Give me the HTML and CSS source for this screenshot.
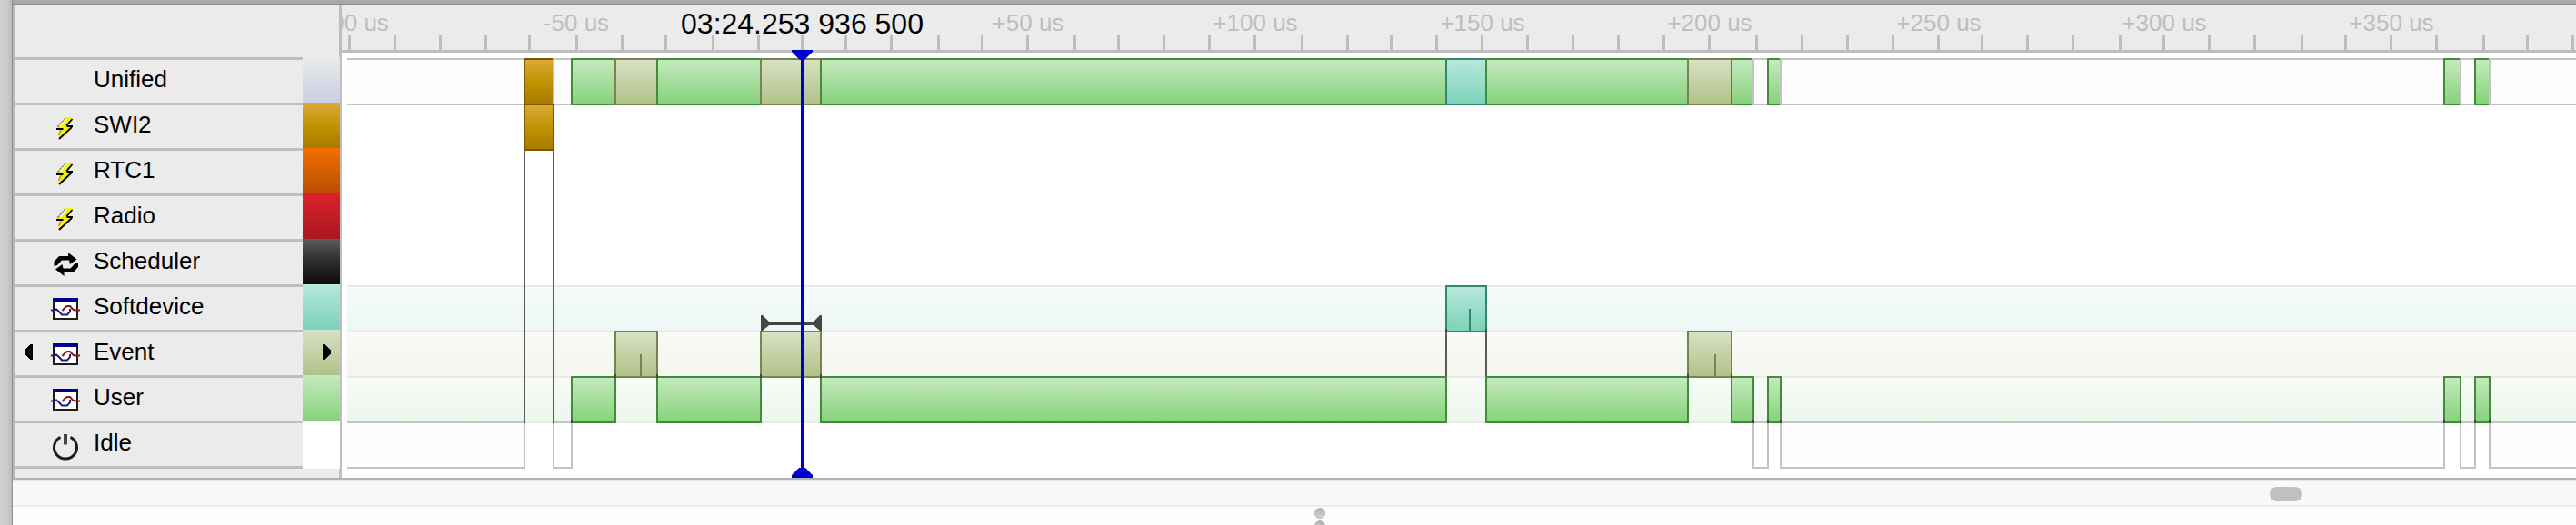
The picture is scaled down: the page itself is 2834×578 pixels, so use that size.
FILE: index.html
```html
<!DOCTYPE html>
<html lang="en">
<head>
<meta charset="utf-8">
<title>Timeline</title>
<link rel="stylesheet" href="styles.css">
</head>
<body>
<svg class="defs" width="0" height="0" aria-hidden="true">
  <symbol id="bolt" viewBox="0 0 36 47">
    <path d="M18 13L8.500 24.500V26H13L10 36H12L26 24V22.500H20L26 15V13Z" fill="#f6f200"/>
    <path d="M18 14L9 24" fill="none" stroke="#8a8a8a" stroke-width="1.800" stroke-dasharray="2.500 1"/>
    <path d="M19 15L12.500 22.500" fill="none" stroke="#fff" stroke-width="1.400"/>
    <path d="M13 27L10.500 33" fill="none" stroke="#9a9a60" stroke-width="1.500"/>
    <path d="M25.500 15L19 22.500M19.500 23H26M25 24L11 37M8 26H15.500" fill="none" stroke="#000" stroke-width="1.900"/>
  </symbol>
  <symbol id="cycle" viewBox="0 0 36 47">
    <path d="M5.500 27V22L11 16H21V12L30.500 19.500L23 25L22 20.500H14L9 26Z" fill="#000"/>
    <path d="M32 23V28L26.500 34H16.500V38L7 30.500L14.500 25L15.500 29.500H23.500L28.500 24Z" fill="#000"/>
  </symbol>
  <symbol id="task" viewBox="0 0 36 47">
    <rect x="5" y="13" width="26" height="22" fill="#fff" stroke="#1c1c1c" stroke-width="2"/>
    <path d="M4 12H32V16H4Z" fill="#00008c"/>
    <path d="M14.500 26L18 22L20 21H23L26 24.500L28 25.500H34" fill="none" stroke="#8c1a1a" stroke-width="2"/>
    <path d="M2 25.500H6L8 24.500L11 27L14 30.500H20L23 27V24" fill="none" stroke="#1c1c8c" stroke-width="2"/>
  </symbol>
  <symbol id="power" viewBox="0 0 36 47">
    <path d="M12.500 15.300A12.500 12.500 0 1 0 23.500 15.300" fill="none" stroke="#1c1c1c" stroke-width="3"/>
    <path d="M18 12V23.500" stroke="#444" stroke-width="4"/>
  </symbol>
</svg>

<div class="window">
  <div class="gutter"></div>
  <div class="main">
    <div class="topbar"></div>
    <div class="panes">
      <div class="sidebar">
        <div class="sidebar-head"></div>
        <div class="row"><div class="cell"><span class="arrow"></span><span class="icon"></span><span class="label">Unified</span></div><div class="swatch unified"></div></div>
        <div class="row"><div class="cell"><span class="arrow"></span><svg class="icon"><use href="#bolt"/></svg><span class="label">SWI2</span></div><div class="swatch swi2"></div></div>
        <div class="row"><div class="cell"><span class="arrow"></span><svg class="icon"><use href="#bolt"/></svg><span class="label">RTC1</span></div><div class="swatch rtc1"></div></div>
        <div class="row"><div class="cell"><span class="arrow"></span><svg class="icon"><use href="#bolt"/></svg><span class="label">Radio</span></div><div class="swatch radio"></div></div>
        <div class="row"><div class="cell"><span class="arrow"></span><svg class="icon"><use href="#cycle"/></svg><span class="label">Scheduler</span></div><div class="swatch scheduler"></div></div>
        <div class="row"><div class="cell"><span class="arrow"></span><svg class="icon"><use href="#task"/></svg><span class="label">Softdevice</span></div><div class="swatch softdevice"></div></div>
        <div class="row"><div class="cell"><svg class="arrow" viewBox="0 0 38 47" shape-rendering="crispEdges"><path d="M20 13V30H17L11 23V20L17 13Z"/></svg><svg class="icon"><use href="#task"/></svg><span class="label">Event</span></div><div class="swatch event"><svg class="next" viewBox="0 0 9 17" shape-rendering="crispEdges"><path d="M0 0H3L9 7V10L3 17H0Z"/></svg></div></div>
        <div class="row"><div class="cell"><span class="arrow"></span><svg class="icon"><use href="#task"/></svg><span class="label">User</span></div><div class="swatch user"></div></div>
        <div class="row last"><div class="cell"><span class="arrow"></span><svg class="icon"><use href="#power"/></svg><span class="label">Idle</span></div><div class="swatch idle"></div></div>
        <div class="sidebar-foot"></div>
      </div>

      <svg class="chart" viewBox="376 6 2458 520" width="2458" height="520">
        <defs>
          <linearGradient id="gGreen" x2="0" y2="1"><stop offset="0" stop-color="#c6eabf"/><stop offset="1" stop-color="#85d27b"/></linearGradient>
          <linearGradient id="gOlive" x2="0" y2="1"><stop offset="0" stop-color="#d8e1c5"/><stop offset="1" stop-color="#b1c287"/></linearGradient>
          <linearGradient id="gTeal" x2="0" y2="1"><stop offset="0" stop-color="#b7e9db"/><stop offset="1" stop-color="#7bd2b8"/></linearGradient>
          <linearGradient id="gGold" x2="0" y2="1"><stop offset="0" stop-color="#dbab37"/><stop offset=".55" stop-color="#c09000"/><stop offset="1" stop-color="#a97900"/></linearGradient>
          <linearGradient id="bTeal" x2="0" y2="1"><stop offset="0" stop-color="#f5fbf9"/><stop offset="1" stop-color="#ecf7f4"/></linearGradient>
          <linearGradient id="bOlive" x2="0" y2="1"><stop offset="0" stop-color="#fafaf7"/><stop offset="1" stop-color="#f4f5ee"/></linearGradient>
          <linearGradient id="bGreen" x2="0" y2="1"><stop offset="0" stop-color="#f7fbf7"/><stop offset="1" stop-color="#ecf7ec"/></linearGradient>
        </defs>

        <!-- ruler -->
        <rect x="376" y="6" width="2458" height="49" fill="#ebebeb"/>
        <rect x="376" y="55" width="2458" height="3" fill="#bebebe"/>
        <path class="ticks" d="M384.500 39v16M434.500 39v16M484.500 39v16M534.500 39v16M582.500 39v16M634.500 39v16M684.500 39v16M732.500 39v16M784.500 39v16M834.500 39v16M882.500 39v16M930.500 39v16M980.500 39v16M1032.500 39v16M1080.500 39v16M1130.500 39v16M1182.500 39v16M1230.500 39v16M1280.500 39v16M1330.500 39v16M1380.500 39v16M1432.500 39v16M1482.500 39v16M1530.500 39v16M1580.500 39v16M1630.500 39v16M1680.500 39v16M1730.500 39v16M1780.500 39v16M1830.500 39v16M1880.500 39v16M1932.500 39v16M1982.500 39v16M2032.500 39v16M2082.500 39v16M2132.500 39v16M2180.500 39v16M2230.500 39v16M2280.500 39v16M2332.500 39v16M2380.500 39v16M2430.500 39v16M2480.500 39v16M2532.500 39v16M2580.500 39v16M2630.500 39v16M2680.500 39v16M2732.500 39v16M2780.500 39v16M2830.500 39v16"/>
        <g class="scale">
          <text x="384.500" y="34">-100 us</text>
          <text x="634" y="34">-50 us</text>
          <text x="1131" y="34">+50 us</text>
          <text x="1381" y="34">+100 us</text>
          <text x="1631" y="34">+150 us</text>
          <text x="1881" y="34">+200 us</text>
          <text x="2133" y="34">+250 us</text>
          <text x="2381" y="34">+300 us</text>
          <text x="2631" y="34">+350 us</text>
        </g>
        <text class="now" x="882.500" y="37">03:24.253 936 500</text>

        <!-- lanes -->
        <rect x="382" y="66" width="2452" height="48" fill="#fdfdfd"/>
        <rect x="382" y="315" width="2452" height="50" fill="url(#bTeal)"/>
        <rect x="382" y="365" width="2452" height="50" fill="url(#bOlive)"/>
        <rect x="382" y="415" width="2452" height="50" fill="url(#bGreen)"/>
        <path class="lane" d="M382 315H2834M382 365H2834M382 415H2834M382 465H2834"/>
        <path class="idle-line" d="M382 65H2834M382 115H577M609 115H629M1929 115H1945M1959 115H2689M2707 115H2723M2739 115H2834"/>
        <g fill="#fdfdfd">
          <rect x="382" y="466" width="195" height="49"/>
          <rect x="1959" y="466" width="730" height="49"/>
          <rect x="2739" y="466" width="95" height="49"/>
        </g>
        <path class="idle-line" d="M382 465H577V515H382M609 465H629V515H609ZM1929 465H1945V515H1929ZM2689 465H1959V515H2689ZM2707 465H2723V515H2707ZM2834 465H2739V515H2834"/>

        <!-- context switches -->
        <path class="switch" d="M577 165V466M609 115V466M1591 365V415M1635 365V415"/>

        <!-- unified lane -->
        <g class="green">
          <rect x="629" y="65" width="48" height="50"/>
          <rect x="723" y="65" width="114" height="50"/>
          <rect x="903" y="65" width="688" height="50"/>
          <rect x="1635" y="65" width="222" height="50"/>
          <rect x="1905" y="65" width="24" height="50"/>
          <rect x="1945" y="65" width="14" height="50"/>
          <rect x="2689" y="65" width="18" height="50"/>
          <rect x="2723" y="65" width="16" height="50"/>
        </g>
        <g class="olive">
          <path d="M723 65H677V115H723"/>
          <path d="M903 65H837V115H903"/>
          <path d="M1905 65H1857V115H1905"/>
        </g>
        <path class="green edge" d="M723 64V116M903 64V116M1905 64V116"/>
        <path class="teal" d="M1634 65H1591V115H1634"/>
        <path class="green edge" d="M1635 64V116"/>
        <path class="gold" d="M608 65H577V115H608"/>
        <path class="idle-line" d="M609 64V114M1929 64V116M1959 64V116M2707 64V116M2739 64V116"/>

        <!-- per-context lanes -->
        <rect class="gold" x="577" y="115" width="32" height="50"/>
        <rect class="teal" x="1591" y="315" width="44" height="50"/>
        <path class="teal edge" d="M1617 340V365"/>
        <g class="olive">
          <rect x="677" y="365" width="46" height="50"/>
          <rect x="837" y="365" width="66" height="50"/>
          <rect x="1857" y="365" width="48" height="50"/>
          <path d="M705 390V415M1887 390V415"/>
        </g>
        <g class="green">
          <rect x="629" y="415" width="48" height="50"/>
          <rect x="723" y="415" width="114" height="50"/>
          <rect x="903" y="415" width="688" height="50"/>
          <rect x="1635" y="415" width="222" height="50"/>
          <rect x="1905" y="415" width="24" height="50"/>
          <rect x="1945" y="415" width="14" height="50"/>
          <rect x="2689" y="415" width="18" height="50"/>
          <rect x="2723" y="415" width="16" height="50"/>
        </g>
        <path class="joint" d="M677 412v4M723 412v4M837 412v4M903 412v4M1857 412v4M1905 412v4M1591 362v4M1635 362v4M629 462v4M1929 462v4M1945 462v4M1959 462v4M2689 462v4M2707 462v4M2723 462v4M2739 462v4"/>

        <!-- selected event span -->
        <path class="span" d="M837 347H839L846 354V358L839 364H837ZM904 347H902L895 354V358L902 364H904ZM845 355H896V358H845Z"/>

        <!-- cursor -->
        <path class="cursor" d="M871 55H894V57L885 66H884V515H886L894 523V526H871V523L879 515H881V66H880L871 57Z"/>
      </svg>
    </div>
    <div class="scroll-edge"></div>
    <div class="scrollbar"><div class="thumb"></div></div>
    <div class="splitter"><i class="dot"></i><i class="dot"></i></div>
  </div>
</div>
</body>
</html>
```

FILE: styles.css
```css
* { box-sizing: border-box; }
body {
  margin: 0;
  width: 2834px;
  height: 578px;
  overflow: hidden;
  background: #fdfdfd;
  font-family: "Liberation Sans", Arial, sans-serif;
  font-size: 26px;
  color: #000;
}
.defs { display: none; }
svg { display: block; }

.window { display: flex; height: 578px; }
.gutter {
  width: 14px;
  background: linear-gradient(90deg, #d0d0d0 0, #cacaca 60%, #bcbcbc 100%);
  border-right: 1px solid #8e8e8e;
}
.main { flex: 1; min-width: 0; }
.topbar { height: 6px; background: #a8a8a8; border-bottom: 2px solid #8b8b8b; }
.panes { display: flex; height: 520px; background: #fff; }

.sidebar {
  width: 362px;
  flex: none;
  background: #ebebeb;
  border-left: 2px solid #bababa;
}
.sidebar-head { height: 57px; border-right: 3px solid #bebebe; }
.sidebar-foot { height: 10px; border-right: 3px solid #bebebe; }
.row { display: flex; height: 50px; border-right: 2px solid #bebebe; }
.row.last { height: 53px; }
.cell { display: flex; width: 317px; border-top: 3px solid #bebebe; }
.last .cell { border-bottom: 3px solid #bebebe; }
.arrow { width: 38px; height: 47px; flex: none; }
.icon { width: 36px; height: 47px; flex: none; margin-right: 13px; }
.label { line-height: 43px; white-space: nowrap; }

.swatch { flex: 1; }
.unified { background: linear-gradient(#ebebeb, #c9cfe1); }
.swi2 { background: linear-gradient(#dbab37, #c09000 55%, #a97900); }
.rtc1 { background: linear-gradient(#f27000, #b84e00); }
.radio { background: linear-gradient(#dc222c, #a8181e); }
.scheduler { background: linear-gradient(#5c5c5c, #303030 45%, #0c0c0c); }
.softdevice { background: linear-gradient(#b7e9db, #7bd2b8); }
.event { background: linear-gradient(#d8e1c5, #b1c287); padding: 16px 0 0 22px; }
.user { background: linear-gradient(#c6eabf, #85d27b); }
.idle { background: #fff; }
.next { width: 9px; height: 17px; }

.chart { flex: none; }
.ticks { stroke: #bebebe; stroke-width: 3; }
.scale { fill: #bebebe; font-size: 26px; text-anchor: middle; }
.now { fill: #000; font-size: 32px; text-anchor: middle; }
.lane { stroke: #e6ebe7; stroke-width: 2; }
.idle-line { fill: none; stroke: #c3c3c3; stroke-width: 2; }
.switch { stroke: #5a5a5a; stroke-width: 2; }
.joint { stroke: #404a3c; stroke-width: 2; }
.green { fill: url(#gGreen); stroke: #438a3a; stroke-width: 2; }
.olive { fill: url(#gOlive); stroke: #76854e; stroke-width: 2; }
.teal { fill: url(#gTeal); stroke: #35866e; stroke-width: 2; }
.gold { fill: url(#gGold); stroke: #7a5800; stroke-width: 2; }
.edge { fill: none; }
.span { fill: #464646; }
.cursor { fill: #0000cc; }

.scroll-edge { height: 4px; background: #e6e6e6; border-top: 2px solid #b3b3b3; }
.scrollbar {
  height: 28px;
  padding: 6px 0 0 2483px;
  background: #f9f9f9;
  border-bottom: 2px solid #ebebeb;
}
.thumb { width: 36px; height: 16px; border-radius: 8px; background: #c0c0c0; }
.splitter {
  display: flex;
  flex-direction: column;
  gap: 2px;
  height: 20px;
  padding: 1px 0 0 1432px;
  overflow: hidden;
}
.dot {
  flex: none;
  width: 12px;
  height: 12px;
  border-radius: 50%;
  background: linear-gradient(#b0b0b0, #d4d4d4);
  border: 1px solid #b4b4b4;
}
```
